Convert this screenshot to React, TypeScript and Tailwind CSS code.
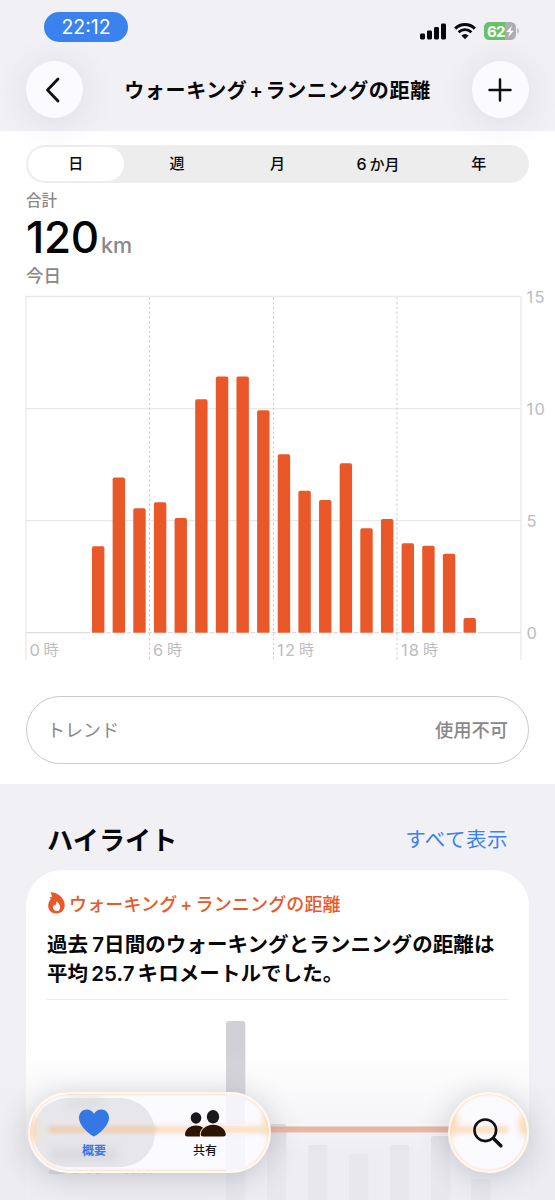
import React from "react";

const tabs = ["日", "週", "月", "6か月", "年"];

// first bar starts at 3:00, one bar per hour, values are km
const distances = [
  3.86, 6.93, 5.56, 5.83, 5.12, 10.43, 11.44, 11.44, 9.94, 7.97, 6.34, 5.93,
  7.57, 4.67, 5.08, 4.0, 3.89, 3.53, 0.66,
];

const weekBars = [
  { x: 200, top: 11 },
  { x: 241, top: 114 },
  { x: 282, top: 135 },
  { x: 323, top: 144 },
  { x: 364, top: 135 },
  { x: 405, top: 126 },
  { x: 445, top: 169 },
];

function StatusBar(): React.JSX.Element {
  return (
    <div className="flex items-start justify-between pt-3 pl-11 pr-[36px]">
      <div className="flex h-[30px] w-[84px] items-center justify-center rounded-full bg-[#3b82ee] pt-px text-[19.5px] text-white">
        22:12
      </div>
      <div className="flex items-center gap-[8px] pt-[10px]">
        <svg width="26" height="17" viewBox="0 0 26 17" fill="#08080c">
          <rect x="0" y="10.5" width="5" height="6" rx="1.4" />
          <rect x="7" y="7.5" width="5" height="9" rx="1.4" />
          <rect x="14" y="4" width="5" height="12.5" rx="1.4" />
          <rect x="21" y="0.5" width="5" height="16" rx="1.4" />
        </svg>
        <svg width="22" height="17" viewBox="0 0 22 17" fill="none" stroke="#08080c">
          <path d="M1.2 5.6a14 14 0 0 1 19.6 0" strokeWidth="3" />
          <path d="M4.6 9.3a9.2 9.2 0 0 1 12.8 0" strokeWidth="2.8" />
          <path d="M11 16.3 7.4 12.6a5.4 5.4 0 0 1 7.2 0Z" fill="#08080c" stroke="none" />
        </svg>
        <svg width="35" height="18" viewBox="0 0 35 18">
          <defs>
            <clipPath id="battery">
              <rect x="0" y="0" width="32" height="18" rx="5.5" />
            </clipPath>
          </defs>
          <g clipPath="url(#battery)">
            <rect width="32" height="18" fill="#acacb1" />
            <rect width="21" height="18" fill="#63c466" />
          </g>
          <path d="M33.4 6.2c1.8.6 1.8 5 0 5.6Z" fill="#acacb1" />
          <text x="3" y="14.5" fontSize="15" fontWeight="700" fill="#fff" textLength="18.5">
            62
          </text>
          <path d="M28 3.8 22.2 10h3.5l-1.5 5.2 5.6-6.5h-3.4Z" fill="#fff" />
        </svg>
      </div>
    </div>
  );
}

function DayChart(): React.JSX.Element {
  const step = 20.64;
  return (
    <svg width="555" height="372" viewBox="0 290 555 372" className="block shrink-0 overflow-visible">
      <g stroke="#e9e9eb" strokeWidth="1.3">
        <path d="M26 296.5H521" />
        <path d="M26 408.7H521" />
        <path d="M26 520.7H521" />
        <path d="M26 632.7H521" stroke="#dddde0" />
        <path d="M26 296V660" />
        <path d="M521 296V660" />
      </g>
      <g stroke="#d0d0d4" strokeWidth="1" strokeDasharray="2.6 2.2">
        <path d="M149.5 297V660" />
        <path d="M273.5 297V660" />
        <path d="M397 297V660" />
      </g>
      {distances.map((km, i) => {
        const h = km * 22.4;
        const x = 92 + i * step;
        const y = 632.8 - h;
        return (
          <g key={i}>
            <path d={`M${x - 1.8} 632.7h16`} stroke="#fff" strokeWidth="1.6" />
            <path
              d={`M${x} 632.8V${y + 1.8}q0 -1.8 1.8 -1.8h8.8q1.8 0 1.8 1.8V632.8Z`}
              fill="#ea582a"
            />
          </g>
        );
      })}
      <g fill="#bcbcc1" fontSize="16.5">
        <text x="526.5" y="302.5" textLength="18">15</text>
        <text x="526.5" y="415" textLength="18.5">10</text>
        <text x="526.5" y="527">5</text>
        <text x="526.5" y="639">0</text>
        <text x="29.5" y="655.5">0</text>
        <text x="43.5" y="655" fontSize="15">時</text>
        <text x="153" y="655.5">6</text>
        <text x="167" y="655" fontSize="15">時</text>
        <text x="277" y="655.5" textLength="18">12</text>
        <text x="299" y="655" fontSize="15">時</text>
        <text x="401" y="655.5" textLength="18">18</text>
        <text x="423" y="655" fontSize="15">時</text>
      </g>
    </svg>
  );
}

function TabBar(): React.JSX.Element {
  return (
    <div className="absolute inset-x-0 bottom-[27px] flex justify-between pl-[28px] pr-[26px]">
      <div className="relative flex h-[81px] w-[243px] items-center overflow-hidden rounded-full border-[2px] border-[#fff9f0] bg-[#fbfaff] p-[3px] shadow-[0_4px_30px_rgba(60,60,80,0.24)]">
        <div className="absolute inset-0 rounded-full shadow-[inset_0_0_2px_1px_#f8e2cb]" />
        <div className="absolute top-[14px] -right-[8px] h-[28px] w-[14px] rounded-full bg-[#fbdcba] blur-[3px]" />
        <div className="absolute top-[22px] -left-[7px] h-[28px] w-[14px] rounded-full bg-[#fbdcba] blur-[4px]" />
        <div className="absolute top-0 right-[24px] h-[30px] w-[19px] bg-[#f4f3f8]" />
        <div className="absolute right-[24px] bottom-0 h-[36px] w-[19px] bg-[#f6f5fa]" />
        <div className="flex h-[69px] w-[122px] rounded-full bg-[#e7e7eb]" />
        <div className="absolute top-[5px] left-[38px] h-[8px] w-[36px] rounded bg-[#dcdce1] blur-[4px]" />
        <div className="absolute bottom-[9px] left-[20px] h-[14px] w-[68px] rounded bg-[#dadadf] blur-[4px]" />
        <div className="absolute top-[32px] right-0 left-[120px] h-[7px] bg-[#fbdfc2] blur-[2px]" />
        <div className="absolute top-[32px] left-[18px] h-[7px] w-[108px] rounded-full bg-[#edcdb2] blur-[2px]" />
        <div className="absolute inset-y-0 left-[3px] flex w-[122px] flex-col items-center text-[#3478e5]">
          <svg width="30" height="28" viewBox="0 0 30 28" className="mt-[15px]">
            <path
              d="M15 27.5C14 27.5 0 18.4 0 8.8 0 3.7 3.4.4 7.8.4c3.3 0 5.7 1.7 7.2 4.5C16.5 2.1 18.9.4 22.2.4 26.6.4 30 3.7 30 8.8 30 18.4 16 27.5 15 27.5Z"
              fill="#3577e5"
            />
          </svg>
          <span className="mt-[5px] text-[12px] leading-[18px] font-bold">概要</span>
        </div>
        <div className="absolute inset-y-0 left-[125px] flex w-[100px] flex-col items-center text-[#101014]">
          <svg width="41" height="27" viewBox="0 0 41 27" className="mt-[16px]">
            <ellipse cx="11" cy="8" rx="5.3" ry="5.8" fill="#19191b" />
            <path d="M2.2 26.5C.8 26.5 0 25.8 0 24.5 0 20.2 4.5 15.6 11 15.6c2.9 0 5.2.8 7 2.2-2 1.8-3.2 4.1-3.2 6.7 0 .8.1 1.4.5 2Z" fill="#2b1305" />
            <ellipse cx="28" cy="6.8" rx="6.2" ry="6.7" fill="#19191b" />
            <path d="M18.2 26.5c-1.6 0-2.5-.8-2.5-2.2 0-4.2 4.8-9.5 12.5-9.5s12.5 5.3 12.5 9.5c0 1.4-.9 2.2-2.5 2.2Z" fill="#2b1305" />
          </svg>
          <span className="mt-[5px] text-[12px] leading-[18px] font-medium">共有</span>
        </div>
      </div>
      <div className="relative flex size-[81px] items-center justify-center overflow-hidden rounded-full border-[2px] border-[#fff7eb] bg-[#fbfaff] shadow-[0_4px_30px_rgba(60,60,80,0.24)]">
        <div className="absolute inset-0 rounded-full shadow-[inset_0_0_2px_1px_#f8e2cb]" />
        <div className="absolute top-[18px] -left-[6px] h-[24px] w-[14px] rounded-full bg-[#fbdcba] blur-[3px]" />
        <div className="absolute top-[20px] -right-[6px] h-[22px] w-[14px] rounded-full bg-[#fbdcba] blur-[3px]" />
        <div className="absolute top-[32px] left-0 h-[7px] w-[58px] bg-[#fbdfc2] blur-[2px]" />
        <svg width="30" height="30" viewBox="0 0 30 30" fill="none" stroke="#101014" className="relative -left-px">
          <circle cx="12.3" cy="12.3" r="10.8" strokeWidth="2.6" />
          <path d="m20.5 20.5 7.3 7.3" strokeWidth="3.5" strokeLinecap="round" />
        </svg>
      </div>
    </div>
  );
}

export default function App(): React.JSX.Element {
  return (
    <div className="relative flex h-[1200px] w-full flex-col overflow-hidden bg-white font-['Inter','Noto_Sans_CJK_JP',sans-serif] text-[#08080a]">
      <header className="relative h-[131px] shrink-0 bg-[#f0f0f5]">
        <StatusBar />
        <div className="mt-[19px] flex items-center justify-between px-[26px]">
          <button className="flex size-[57px] items-center justify-center rounded-full bg-[#fbfaff] shadow-[0_4px_36px_rgba(60,60,80,0.11)]">
            <svg width="16" height="26" viewBox="0 0 16 26" fill="none" stroke="#101014" strokeWidth="2.8" strokeLinecap="round" strokeLinejoin="round" className="-ml-[3px]">
              <path d="M13 2 2.5 13 13 24" />
            </svg>
          </button>
          <h1 className="flex items-center pt-[2px] text-[20px] font-bold tracking-[0.65px] whitespace-nowrap">
            ウォーキング<span className="mx-[2px] font-semibold">+</span>ランニングの距離
          </h1>
          <button className="flex size-[57px] items-center justify-center rounded-full bg-[#fbfaff] shadow-[0_4px_36px_rgba(60,60,80,0.11)]">
            <svg width="24" height="24" viewBox="0 0 24 24" stroke="#101014" strokeWidth="2.5" strokeLinecap="round" className="-ml-px">
              <path d="M12 1.5v21M1.5 12h21" />
            </svg>
          </button>
        </div>
      </header>

      <main className="flex flex-1 flex-col">
        <div className="mx-[26px] mt-[14px] flex h-[38px] shrink-0 items-center rounded-full bg-[#ededee] text-[15px] font-medium">
          {tabs.map((tab, i) => (
            <div key={tab} className="flex h-full flex-1 items-center justify-center p-[2px]">
              <span
                className={
                  i === 0
                    ? "flex h-full w-[96px] items-center justify-center rounded-full bg-white pt-px pr-px"
                    : "flex items-baseline pt-px"
                }
              >
                {tab === "6か月" ? (
                  <>
                    <span className="mr-[3px] text-[16px]">6</span>か月
                  </>
                ) : (
                  tab
                )}
              </span>
            </div>
          ))}
        </div>

        <div className="flex h-[107px] shrink-0 flex-col pl-[26px] text-[#88888c]">
          <span className="mt-[8px] text-[15.5px] leading-[20px] font-medium">合計</span>
          <div className="mt-[2px] flex h-[48px] items-baseline">
            <span className="text-[44px] leading-[48px] font-medium tracking-[-0.3px] text-[#050506]">120</span>
            <span className="ml-[2px] text-[21.5px] font-medium">km</span>
          </div>
          <span className="mt-[5px] text-[17.5px] leading-[20px] font-medium">今日</span>
        </div>

        <DayChart />

        <div className="mx-[26px] mt-[34px] flex h-[68px] shrink-0 items-center justify-between rounded-full border border-[#c9c9ce] px-[20px] text-[18px] text-[#88888c]">
          <span>トレンド</span>
          <span className="pt-px text-[18.3px] font-medium">使用不可</span>
        </div>

        <section className="mt-[20px] flex flex-1 flex-col bg-[#f0f0f5] px-[26px]">
          <div className="flex h-[86px] shrink-0 items-center justify-between px-[21px] pt-[26px]">
            <h2 className="text-[26px] font-bold tracking-[0.2px]">ハイライト</h2>
            <a className="text-[20.5px] tracking-[0.5px] text-[#3b82f0]">すべて表示</a>
          </div>
          <div className="flex-1 rounded-t-[36px] bg-white pt-[20px]">
            <div className="flex h-[28px] items-center pl-[22px] text-[18px] font-medium tracking-[0.15px] whitespace-nowrap text-[#ea582a]">
              <svg width="17" height="22" viewBox="0 0 17 22" className="mr-[4px] -mt-[2px]">
                <path
                  d="M2.5.3C9.500.2 16.700 6 16.700 13.300c0 4.900-3.500 8.200-8.300 8.200-4.900 0-8.200-3.200-8.200-7.700 0-3 1.200-5.200 2.600-6.900C2.500 6.200 2 5.600 1.300 5.100c.9-.2 1.700-.1 2.400.2C3.900 3.600 3.500 1.800 2.500.3Z"
                  fill="#ea582a"
                />
                <path
                  d="M8.200 9.600c2.500 1.300 3.900 3.400 3.900 5.800 0 2.200-1.400 3.700-3.500 3.700s-3.500-1.400-3.500-3.500c0-1.200.5-2.200 1.100-2.800.2.500.5.8.9 1 .8-1.100 1.300-2.600 1.100-4.200Z"
                  fill="#fff"
                />
              </svg>
              ウォーキング<span className="mx-[3px]">+</span>ランニングの距離
            </div>
            <p className="mt-[12px] pl-[21px] text-[20.5px] leading-[29px] font-bold tracking-[0.08px] whitespace-nowrap">
              過去<span className="ml-[4px] font-semibold">7</span>日間のウォーキングとランニングの距離は
              <br />
              平均<span className="mx-[3px] font-semibold">25.7</span>キロメートルでした。
            </p>
            <div className="mx-[21px] mt-[11px] h-px bg-[#ebebef]" />
            <svg width="503" height="190" viewBox="0 0 503 190" className="mt-[10px] block">
              {weekBars.map((bar) => (
                <rect key={bar.x} x={bar.x} y={bar.top} width="19.3" height="200" rx="3" fill="#d0d0d6" />
              ))}
              <text x="21" y="163.5" fontSize="30" fontWeight="600" fill="#77777c">25.7</text>
              <text x="98" y="163.5" fontSize="20" fontWeight="500" fill="#77777c">km</text>
              <rect x="21" y="116.5" width="461" height="6" fill="#ea7443" />
            </svg>
          </div>
        </section>
      </main>

      <div className="absolute inset-x-0 bottom-0 h-[150px] bg-linear-to-b from-[#ebebf000] via-[#ebebf080] via-50% to-[#ebebf0dd] to-70%" />
      <TabBar />
    </div>
  );
}
